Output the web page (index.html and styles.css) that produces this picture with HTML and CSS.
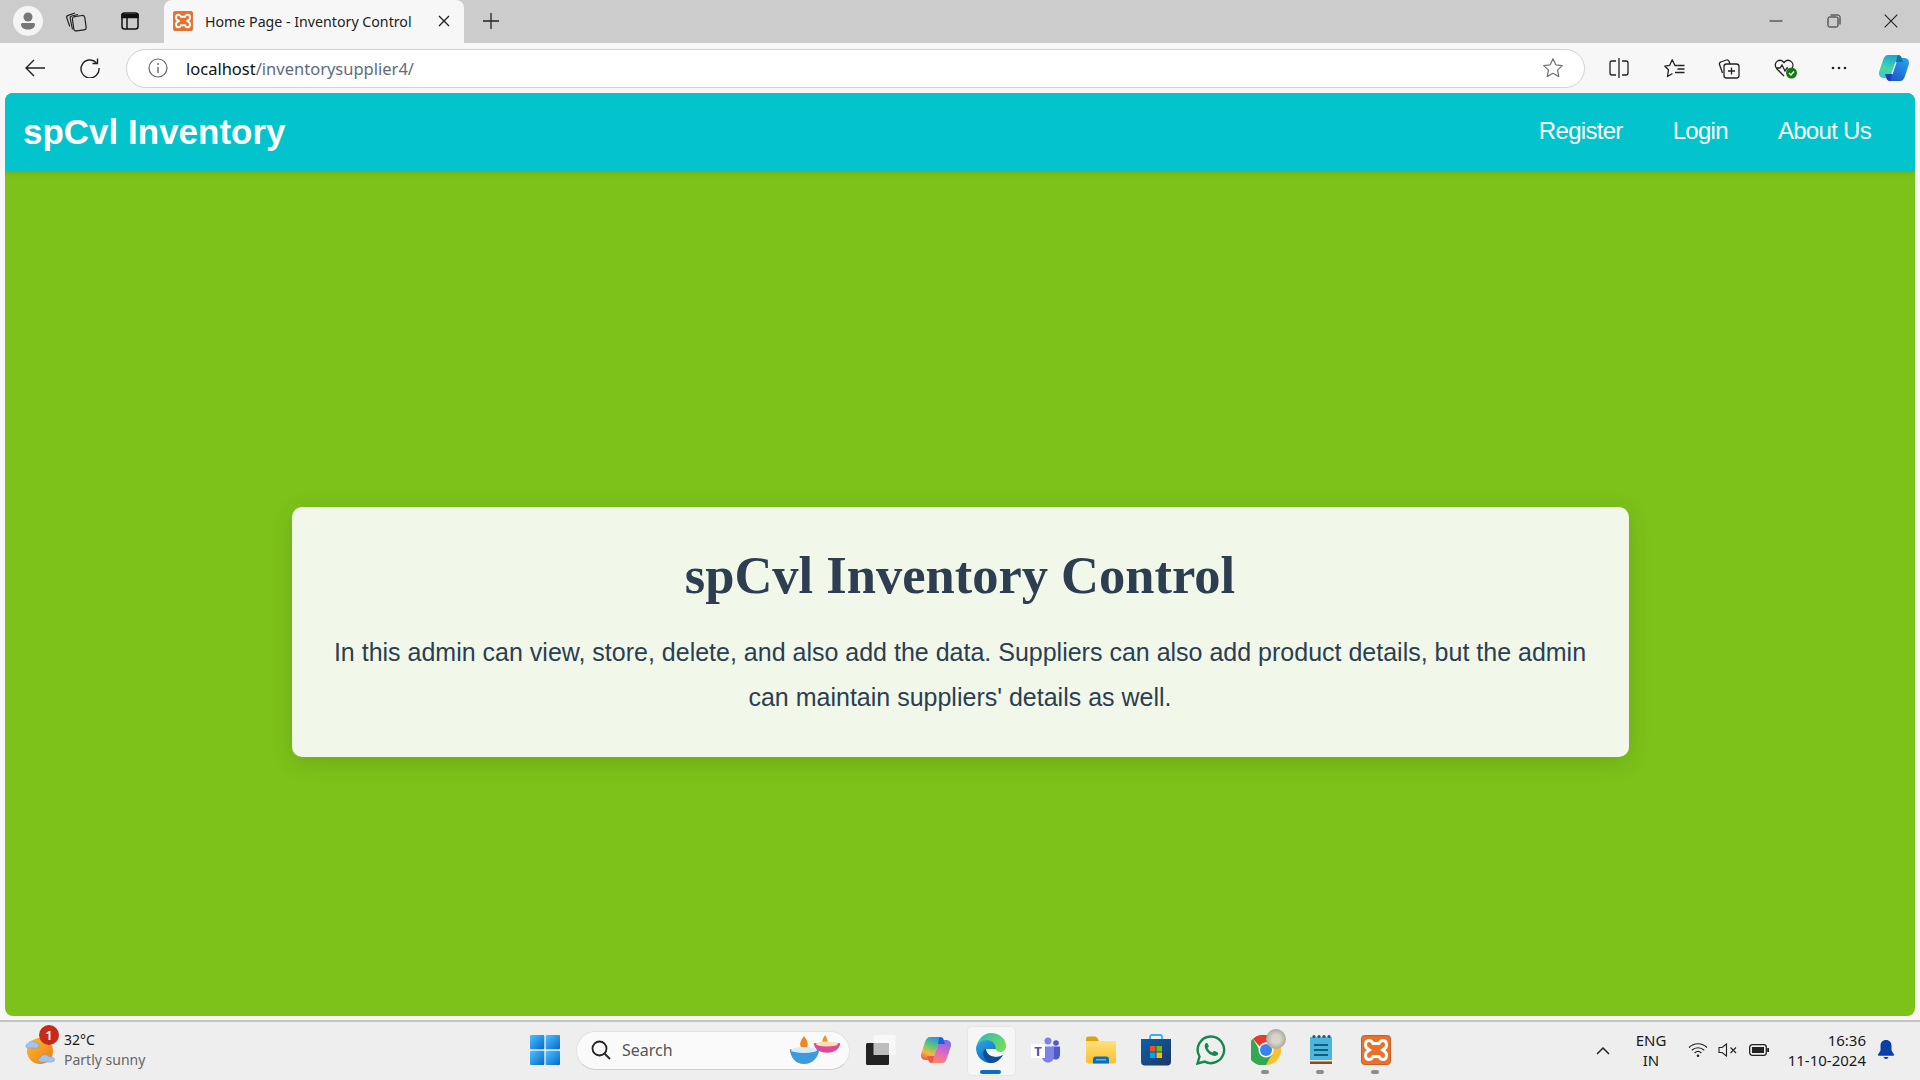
FILE: index.html
```html
<!DOCTYPE html>
<html lang="en">
<head>
  <meta charset="UTF-8">
  <title>Home Page - Inventory Control</title>
  <link rel="stylesheet" href="styles.css">
</head>
<body>

  <svg class="defs" width="0" height="0">
    <defs>
      <symbol id="xampp" viewBox="0 0 30 30">
        <rect x="0.5" y="0.5" width="29" height="29" rx="3" fill="#e8722c"/>
        <rect x="0.5" y="0.5" width="29" height="29" rx="3" fill="none" stroke="#c9601f"/>
        <path d="M8 5.500c-2.400 0-3.500 2.200-3.500 4.500 0 2 1 3.400 3 4.200l1 .8-1 .8c-2 .8-3 2.200-3 4.200 0 2.300 1.100 4.500 3.500 4.500 2 0 3.200-1.200 4-3h6c.8 1.800 2 3 4 3 2.400 0 3.500-2.200 3.500-4.500 0-2-1-3.400-3-4.200l-1-.8 1-.8c2-.8 3-2.200 3-4.200 0-2.300-1.100-4.500-3.500-4.500-2 0-3.200 1.200-4 3h-6c-.8-1.800-2-3-4-3z" fill="none" stroke="#fff" stroke-width="3"/>
      </symbol>
      <linearGradient id="cpA" x1="0.6" y1="0" x2="0.3" y2="1">
        <stop offset="0" stop-color="#19a4dc"/>
        <stop offset="0.6" stop-color="#45d8a4"/>
        <stop offset="1" stop-color="#3fc9c0"/>
      </linearGradient>
      <linearGradient id="cpB" x1="0.8" y1="0" x2="0.2" y2="1">
        <stop offset="0" stop-color="#2aa0ea"/>
        <stop offset="1" stop-color="#1a55d0"/>
      </linearGradient>
      <linearGradient id="cpC" x1="0.7" y1="0" x2="0.3" y2="1">
        <stop offset="0" stop-color="#2f8cf0"/>
        <stop offset="0.4" stop-color="#58c878"/>
        <stop offset="0.75" stop-color="#f5b83c"/>
        <stop offset="1" stop-color="#f2604e"/>
      </linearGradient>
      <linearGradient id="cpD" x1="0.7" y1="0" x2="0.3" y2="1">
        <stop offset="0" stop-color="#7a6cf0"/>
        <stop offset="0.55" stop-color="#e468c0"/>
        <stop offset="1" stop-color="#f78a5c"/>
      </linearGradient>
      <linearGradient id="winG" x1="0" y1="0" x2="1" y2="1">
        <stop offset="0" stop-color="#4cc2ff"/>
        <stop offset="1" stop-color="#0668c8"/>
      </linearGradient>
      <linearGradient id="edgeG" x1="0" y1="0" x2="0.6" y2="1">
        <stop offset="0" stop-color="#2fa8e4"/>
        <stop offset="1" stop-color="#0d62b8"/>
      </linearGradient>
      <linearGradient id="edgeT" x1="0" y1="0" x2="1" y2="0.6">
        <stop offset="0" stop-color="#2cb5c8"/>
        <stop offset="1" stop-color="#6ede58"/>
      </linearGradient>
      <linearGradient id="sunG" x1="0" y1="0" x2="1" y2="1">
        <stop offset="0" stop-color="#fbbd2e"/>
        <stop offset="1" stop-color="#ee7a14"/>
      </linearGradient>
      <linearGradient id="folderG" x1="0" y1="0" x2="0" y2="1">
        <stop offset="0" stop-color="#ffe17a"/>
        <stop offset="1" stop-color="#f9bf2c"/>
      </linearGradient>
      <linearGradient id="storeG" x1="0" y1="0" x2="1" y2="1">
        <stop offset="0" stop-color="#0c62a8"/>
        <stop offset="1" stop-color="#1d3668"/>
      </linearGradient>
    </defs>
  </svg>

  <div class="tabstrip">
    <div class="profile">
      <svg width="30" height="30" viewBox="0 0 30 30"><circle cx="15" cy="15" r="15" fill="#f4f4f4"/><circle cx="15" cy="11" r="4.500" fill="#777"/><path d="M8 18.500c0-1 .8-1.500 1.500-1.500h11c.8 0 1.500.5 1.500 1.500 0 3-3 5-7 5s-7-2-7-5z" fill="#777"/></svg>
    </div>
    <div class="strip-btn">
      <svg width="22" height="22" viewBox="0 0 22 22" fill="none" stroke="#222" stroke-width="1.200"><rect x="8" y="6" width="12.500" height="14.500" rx="2.500" transform="rotate(-8 14 13)"/><path d="M7.500 19.500L5.200 8.500c-.2-1.200.4-2.200 1.600-2.500l6.200-1.500"/><path d="M4.800 16.500L1.800 8c-.4-1.200.2-2.200 1.300-2.600L10 3"/></svg>
    </div>
    <div class="strip-btn">
      <svg width="20" height="20" viewBox="0 0 20 20" fill="none" stroke="#111" stroke-width="1.500"><rect x="2" y="2" width="16" height="16" rx="2.500"/><path d="M2 3.500h16v3H2z" fill="#111"/><path d="M7 6v12"/></svg>
    </div>
    <div class="tab">
      <svg class="favicon" width="20" height="20"><use href="#xampp"/></svg>
      <span class="tab-title">Home Page - Inventory Control</span>
      <svg class="tab-close" width="12" height="12" viewBox="0 0 12 12" stroke="#222" stroke-width="1.400"><path d="M1 1l10 10M11 1L1 11"/></svg>
    </div>
    <div class="new-tab">
      <svg width="18" height="18" viewBox="0 0 18 18" stroke="#222" stroke-width="1.300"><path d="M9 1v16M1 9h16"/></svg>
    </div>
    <div class="win-controls">
      <div class="win-btn"><svg width="14" height="14" viewBox="0 0 14 14" stroke="#222" stroke-width="1"><path d="M0.500 7h13"/></svg></div>
      <div class="win-btn"><svg width="14" height="14" viewBox="0 0 14 14" fill="none" stroke="#222" stroke-width="1"><rect x="1" y="3" width="10" height="10" rx="1.500"/><path d="M3.500 1h7.500c1.100 0 2 .9 2 2v7.500"/></svg></div>
      <div class="win-btn"><svg width="14" height="14" viewBox="0 0 14 14" stroke="#222" stroke-width="1.100"><path d="M.7.7l12.600 12.600M13.300.7L.7 13.300"/></svg></div>
    </div>
  </div>

  <div class="toolbar">
    <div class="tool-btn">
      <svg width="20" height="20" viewBox="0 0 20 20" fill="none" stroke="#222" stroke-width="1.400"><path d="M20 10H1M9 2l-8 8 8 8"/></svg>
    </div>
    <div class="tool-btn">
      <svg width="20" height="20" viewBox="0 0 20 20" fill="none" stroke="#222" stroke-width="1.400"><path d="M16.500 4.700A9 9 0 1 0 19 10"/><path d="M17.500 .5v5h-5"/></svg>
    </div>
    <div class="address">
      <svg class="info" width="20" height="20" viewBox="0 0 20 20" fill="none" stroke="#666" stroke-width="1.200"><circle cx="10" cy="10" r="9"/><path d="M10 9v6" stroke-width="1.400"/><circle cx="10" cy="6" r=".9" fill="#666" stroke="none"/></svg>
      <span class="url"><span class="host">localhost</span>/inventorysupplier4/</span>
      <svg class="star" width="22" height="22" viewBox="0 0 22 22" fill="none" stroke="#777" stroke-width="1.300" stroke-linejoin="round"><path d="M11 1.800l2.800 6 6.500.8-4.800 4.500 1.300 6.500-5.800-3.300-5.800 3.300 1.300-6.500-4.800-4.500 6.500-.8z"/></svg>
    </div>
    <div class="tool-icons">
      <div class="tool-icon">
        <svg width="20" height="22" viewBox="0 0 20 22" fill="none" stroke="#222" stroke-width="1.300"><path d="M7 4H3c-1.200 0-2 .8-2 2v10c0 1.200.8 2 2 2h4"/><path d="M13 4h4c1.200 0 2 .8 2 2v10c0 1.200-.8 2-2 2h-4"/><path d="M10 1v20"/></svg>
      </div>
      <div class="tool-icon">
        <svg width="21" height="19" viewBox="0 0 21 19" fill="none" stroke="#222" stroke-width="1.300" stroke-linejoin="round"><path d="M13.500 6.500H11L8.200 .8 5.700 6.300.8 7.200l3.700 3.500-1 6.800 5-3"/><path d="M13.500 6.500h7M13.500 10h7M11 13.500h9.500"/></svg>
      </div>
      <div class="tool-icon">
        <svg width="22" height="22" viewBox="0 0 22 22" fill="none" stroke="#222" stroke-width="1.300"><rect x="6" y="7" width="15" height="14" rx="2.500"/><path d="M13.500 10.500v7M10 14h7"/><path d="M4.500 16L1.500 7.500C1.100 6.400 1.700 5.300 2.800 5L8.500 3c1-.3 2 .2 2.500 1.200l1 2.800"/></svg>
      </div>
      <div class="tool-icon health">
        <svg width="24" height="24" viewBox="0 0 24 24" fill="none"><path d="M10 20l-7-7C.5 10.500.8 6.500 3.500 5c2.500-1.400 5-.5 6.500 1.500C11.500 4.500 14 3.600 16.500 5c2.500 1.400 3 4.500 1.800 7" stroke="#222" stroke-width="1.300"/><path d="M2 12h4l2-3 3 6 2-3h1" stroke="#222" stroke-width="1.300"/><circle cx="17.500" cy="17" r="5.500" fill="#107c10"/><path d="M15 17l2 2 3-3.500" stroke="#fff" stroke-width="1.400"/></svg>
      </div>
      <div class="tool-icon">
        <svg width="16" height="4" viewBox="0 0 16 4" fill="#222"><circle cx="2" cy="2" r="1.300"/><circle cx="8" cy="2" r="1.300"/><circle cx="14" cy="2" r="1.300"/></svg>
      </div>
      <div class="tool-icon">
        <svg width="32" height="28" viewBox="0 0 32 28">
          <path d="M10 1h10c1.500 0 3 1 3.500 2.500L18 8l-4 12c-.8 2.500-2.500 4-5 4H5.500C2 24 .2 21 1.200 17.500L5 6c1-3 2.500-5 5-5z" fill="url(#cpA)"/>
          <path d="M22 27H12c-1.500 0-3-1-3.500-2.500L14 20l4-12c.8-2.500 2.500-4 5-4h3.500C30 4 31.800 7 30.800 10.500L27 22c-1 3-2.500 5-5 5z" fill="url(#cpB)"/>
          <path d="M18 8l-4 12" stroke="#fff" stroke-width="1.200"/>
          <path d="M20 1c1.500 0 3 1 3.500 2.500L25 8h-7c.8-3 1-6 2-7z" fill="#12759c"/>
          <path d="M12 27c-1.500 0-3-1-3.500-2.500L7 20h7c-.8 3-1 6-2 7z" fill="#1b3fb8"/>
        </svg>
      </div>
    </div>
  </div>

  <div class="page">
    <nav class="navbar">
      <a class="brand">spCvl Inventory</a>
      <div class="nav-links">
        <a>Register</a>
        <a>Login</a>
        <a>About Us</a>
      </div>
    </nav>
    <main class="main">
      <section class="card">
        <h1>spCvl Inventory Control</h1>
        <p>In this admin can view, store, delete, and also add the data. Suppliers can also add product details, but the admin can maintain suppliers' details as well.</p>
      </section>
    </main>
  </div>

  <div class="taskbar">
    <div class="weather">
      <div class="weather-icon">
        <svg width="32" height="36" viewBox="0 0 32 36"><circle cx="15" cy="19" r="13" fill="url(#sunG)"/><path d="M3 16c-2.500 0-3-4 0-4 .5-3 6-4 8-1 3-.5 4 4 1 5z" fill="#a3c4f3" stroke="#6f9de0" stroke-width=".6"/><path d="M16 30c-3 0-3.500-4-.5-4.500 .5-3 6-4 8-1 3 0 6 1 6 3 0 1.500-1 2.500-3 2.500z" fill="#a3c4f3" stroke="#6f9de0" stroke-width=".6"/></svg>
        <span class="badge">1</span>
      </div>
      <div class="weather-text">
        <span class="temp">32°C</span>
        <span class="sky">Partly sunny</span>
      </div>
    </div>

    <div class="task-slot">
      <svg width="30" height="30" viewBox="0 0 30 30" fill="url(#winG)"><rect x="0" y="0" width="14.300" height="14.300" rx="1"/><rect x="15.700" y="0" width="14.300" height="14.300" rx="1"/><rect x="0" y="15.700" width="14.300" height="14.300" rx="1"/><rect x="15.700" y="15.700" width="14.300" height="14.300" rx="1"/></svg>
    </div>

    <div class="search">
      <svg width="20" height="20" viewBox="0 0 20 20" fill="none" stroke="#222" stroke-width="1.800"><circle cx="8.500" cy="8.500" r="7"/><path d="M13.500 13.500l5.500 5.500"/></svg>
      <span class="search-label">Search</span>
      <svg class="diya" width="52" height="30" viewBox="0 0 52 30">
        <path d="M36 0c-2 3-3 5-2.500 7 .3 1.500 1.500 2.500 2.500 2.500s2.200-1 2.500-2.500c.5-2-.5-4-2.500-7z" fill="#f5941e"/>
        <path d="M26 8h24c1 0 1.500 .8 1 1.800-1 4-5 8-13 8s-12-4-13-8c-.5-1 0-1.800 1-1.800z" fill="#e2489a"/>
        <ellipse cx="38" cy="9" rx="11" ry="2.500" fill="#f9e0b8"/>
        <path d="M15 1c-3 4-4.500 7-3.500 10 .5 2 2 3 3.500 3s3-1 3.500-3c1-3-.5-6-3.500-10z" fill="#f5851e"/>
        <path d="M1 14h28c1 0 1.500 1 1 2-1 6-6 13-15 13S2 22 1 16c-.5-1 0-2 1-2z" fill="#3b9bdc"/>
        <ellipse cx="15" cy="15" rx="13" ry="3" fill="#d6ecf7"/>
      </svg>
    </div>

    <div class="task-slot">
      <svg width="30" height="30" viewBox="0 0 30 30"><rect x="7.500" y="0" width="22" height="20" rx="1" fill="#f8f8f8"/><rect x="0" y="8" width="23" height="22" rx="1.500" fill="#222"/><rect x="7.500" y="8" width="15.500" height="12" fill="#bdbdbd"/></svg>
    </div>
    <div class="task-slot">
      <svg width="32" height="28" viewBox="0 0 32 28">
        <path d="M10 1h10c1.500 0 3 1 3.500 2.500L18 8l-4 12c-.8 2.500-2.500 4-5 4H5.500C2 24 .2 21 1.200 17.500L5 6c1-3 2.500-5 5-5z" fill="url(#cpC)"/>
        <path d="M22 27H12c-1.500 0-3-1-3.500-2.500L14 20l4-12c.8-2.500 2.500-4 5-4h3.500C30 4 31.800 7 30.800 10.500L27 22c-1 3-2.500 5-5 5z" fill="url(#cpD)"/>
        <path d="M20 1c1.500 0 3 1 3.500 2.500L25 8h-7c.8-3 1-6 2-7z" fill="#1f5fd8"/>
        <path d="M12 27c-1.500 0-3-1-3.500-2.500L7 20h7c-.8 3-1 6-2 7z" fill="#ee5a48"/>
      </svg>
    </div>
    <div class="task-slot active">
      <svg width="32" height="32" viewBox="0 0 32 32">
        <path d="M16 1c8.500 0 15 6 15 13 0 4-3 6-6 6-2.500 0-4-1-4-3 0-4-4-8-9-8-5 0-10 3-11 8C2 8 8 1 16 1z" fill="url(#edgeT)"/>
        <path d="M1 16c1-5 6-8 11-8 5 0 9 4 9 9H11c0 5 5 8 10 8 3 0 5-.7 7-2-3 4-7 8-12 8C7 31 1 24 1 16z" fill="url(#edgeG)"/>
        <path d="M11 17c-3 1-3.500 5-2 8 2 4 5 6 7 6 5 0 9-3 12-8-2 1.300-4 2-7 2-5 0-10-3-10-8z" fill="#0b4f96"/>
      </svg>
      <span class="active-bar"></span>
    </div>
    <div class="task-slot">
      <svg width="30" height="26" viewBox="0 0 30 26"><circle cx="17" cy="4" r="3.500" fill="#7b83eb"/><circle cx="25" cy="6" r="2.800" fill="#5059c9"/><path d="M21 9.500h8v8c0 3-2 5-4.500 5S21 21 21 18z" fill="#5059c9"/><path d="M11 9.500h12v10c0 3.500-2.500 6-6 6s-6-2.500-6-6z" fill="#7b83eb"/><rect x="0" y="7" width="14" height="14" fill="#fff"/><text class="teams-t" x="7" y="18.500">T</text></svg>
    </div>
    <div class="task-slot">
      <svg width="32" height="28" viewBox="0 0 32 28"><path d="M1 3c0-1.500 1-2.500 2.500-2.500h6c1 0 2 .5 3 1.800L14 5H1z" fill="#e0a30e"/><path d="M1 5h30v20c0 1.500-1 2.500-2.500 2.500h-25C2 27.500 1 26.500 1 25z" fill="url(#folderG)"/><path d="M8 27.500v-4c0-2 1-3 3-3h10c2 0 3 1 3 3v4z" fill="#0a6cc2"/><rect x="11" y="23" width="10" height="1.500" fill="#5db2ea"/></svg>
    </div>
    <div class="task-slot">
      <svg width="30" height="32" viewBox="0 0 30 32"><path d="M9 5V3c0-1 .8-2 2-2h8c1.200 0 2 1 2 2v2" fill="none" stroke="#29b6f6" stroke-width="1.800"/><path d="M0 5h30v23c0 2-1.500 3.500-3.500 3.500h-23C1.500 31.500 0 30 0 28z" fill="url(#storeG)"/><rect x="9" y="12" width="5.500" height="5.500" fill="#f25022"/><rect x="15.500" y="12" width="5.500" height="5.500" fill="#7fba00"/><rect x="9" y="18.500" width="5.500" height="5.500" fill="#00a4ef"/><rect x="15.500" y="18.500" width="5.500" height="5.500" fill="#ffb900"/></svg>
    </div>
    <div class="task-slot">
      <svg width="30" height="30" viewBox="0 0 30 30"><path d="M15 1.500A13.300 13.300 0 0 0 3.500 21.500L1.500 28.500l7.200-1.900A13.300 13.300 0 1 0 15 1.500z" fill="none" stroke="#17874e" stroke-width="2.400"/><path d="M10.500 8c-.8 0-1.800 1.200-1.800 3 0 4 4.500 9.500 9.800 10 2 .2 3.500-1 3.700-2.400.1-.6 0-1-.5-1.200l-3-1.400c-.5-.2-.8 0-1.100.3l-1 1.300c-2.400-.9-4-2.500-5-4.600l1-1.200c.2-.3.300-.6.100-1l-1.200-2.500C11.300 8 11 8 10.500 8z" fill="#17874e"/></svg>
    </div>
    <div class="task-slot chrome-slot">
      <svg width="30" height="30" viewBox="0 0 30 30"><path d="M15 0a15 15 0 0 1 13 7.500H15a7.500 7.500 0 0 0-6.500 3.800L2 3.800A15 15 0 0 1 15 0z" fill="#e33b2e"/><path d="M28 7.500A15 15 0 0 1 15 30l6.500-11.300A7.500 7.500 0 0 0 21.500 11z" fill="#fbc02d"/><path d="M2 3.800l6.500 11.200a7.500 7.500 0 0 0 13 3.700L15 30A15 15 0 0 1 2 3.800z" fill="#34a853"/><circle cx="15" cy="15" r="7.500" fill="#fff"/><circle cx="15" cy="15" r="6" fill="#3b82f0"/></svg>
      <span class="chrome-avatar"></span>
      <span class="run-dot"></span>
    </div>
    <div class="task-slot">
      <svg width="24" height="32" viewBox="0 0 24 32"><rect x="1" y="3" width="22" height="26" rx="1" fill="#4cb5de"/><rect x="1" y="27" width="22" height="3" fill="#8a4a1f"/><rect x="1" y="26" width="22" height="1.500" fill="#f2e3cf"/><g fill="#0e5f86"><circle cx="5" cy="2.500" r="1.600"/><circle cx="10" cy="2.500" r="1.600"/><circle cx="15" cy="2.500" r="1.600"/><circle cx="20" cy="2.500" r="1.600"/><rect x="5" y="10" width="14" height="2"/><rect x="5" y="15" width="14" height="2"/><rect x="5" y="20" width="14" height="2"/></g></svg>
      <span class="run-dot"></span>
    </div>
    <div class="task-slot">
      <svg width="30" height="30"><use href="#xampp"/></svg>
      <span class="run-dot"></span>
    </div>

    <div class="tray">
      <svg class="chevron" width="14" height="9" viewBox="0 0 14 9" fill="none" stroke="#222" stroke-width="1.500"><path d="M1 8l6-6 6 6"/></svg>
      <div class="lang"><span>ENG</span><span>IN</span></div>
      <div class="tray-icons">
        <svg width="20" height="16" viewBox="0 0 20 16" fill="none" stroke="#222" stroke-width="1.200"><path d="M1 5.500c5-5 13-5 18 0M3.800 8.300c3.500-3.400 8.900-3.400 12.400 0M6.600 11c2-1.800 4.800-1.800 6.800 0"/><circle cx="10" cy="13.800" r="1.300" fill="#222" stroke="none"/></svg>
        <svg width="20" height="14" viewBox="0 0 20 14" fill="none" stroke="#222" stroke-width="1.100"><path d="M1 4.500h3L8.500 1v12L4 9.500H1z"/><path d="M12.500 4.500l5.500 5.500M18 4.500L12.500 10"/></svg>
        <svg width="20" height="12" viewBox="0 0 20 12"><rect x=".7" y=".7" width="16.600" height="10.600" rx="2.500" fill="none" stroke="#222" stroke-width="1.300"/><rect x="3" y="3" width="12" height="6" fill="#222"/><rect x="18.200" y="4" width="1.800" height="4" fill="#222"/></svg>
      </div>
      <div class="clock"><span>16:36</span><span>11-10-2024</span></div>
      <svg class="bell" width="18" height="20" viewBox="0 0 18 20" fill="#0b3fa8"><path d="M9 0C5.500 0 3.500 2.500 3.500 6v4.500L1 14.500c-.3.600 0 1.200.7 1.200h14.600c.7 0 1-.6.7-1.200l-2.500-4V6C14.500 2.500 12.500 0 9 0z"/><path d="M6.500 17h5c-.4 1.300-1.400 2-2.500 2s-2.100-.7-2.500-2z"/></svg>
    </div>
  </div>

</body>
</html>
```

FILE: styles.css
```css
* {
  box-sizing: border-box;
}

html, body {
  margin: 0;
  height: 100%;
}

body {
  width: 1920px;
  height: 1080px;
  overflow: hidden;
  display: flex;
  flex-direction: column;
  background-color: #f7f7f7;
  font-family: "Noto Sans", sans-serif;
  color: #1a1a1a;
}

.defs {
  position: absolute;
}

svg {
  display: block;
  flex-shrink: 0;
}

/* browser tab strip */
.tabstrip {
  height: 43px;
  display: flex;
  align-items: center;
  background-color: #cccccc;
  padding-left: 13px;
  padding-bottom: 1px;
}

.profile {
  width: 30px;
  height: 30px;
}

.strip-btn {
  width: 54px;
  display: flex;
  justify-content: center;
}

.strip-btn:nth-child(2) {
  margin-left: 6px;
}

.tab {
  align-self: flex-end;
  width: 300px;
  height: 43px;
  margin-left: 7px;
  margin-bottom: -1px;
  display: flex;
  align-items: center;
  padding-left: 9px;
  padding-bottom: 1px;
  background-color: #f7f7f7;
  border-radius: 8px 8px 0 0;
}

.tab-title {
  margin-left: 12px;
  width: 233px;
  font-size: 14.2px;
  white-space: nowrap;
  color: #222;
}

.new-tab {
  margin-left: 18px;
}

.win-controls {
  margin-left: auto;
  display: flex;
}

.win-btn {
  width: 57.500px;
  height: 42px;
  display: flex;
  align-items: center;
  justify-content: center;
}

/* address bar row */
.toolbar {
  height: 50px;
  display: flex;
  align-items: center;
  padding-left: 7px;
  background-color: #f7f7f7;
}

.tool-btn {
  width: 55px;
  display: flex;
  justify-content: center;
}

.address {
  flex: 1;
  height: 39px;
  margin-left: 9px;
  margin-right: 7px;
  display: flex;
  align-items: center;
  padding: 0 20px 0 21px;
  background-color: #fff;
  border: 1px solid #d2d2d2;
  border-radius: 20px;
}

.url {
  margin-left: 18px;
  font-size: 16.5px;
  color: #5f6b7c;
}

.host {
  color: #111;
}

.star {
  margin-left: auto;
}

.tool-icons {
  display: flex;
  width: 328px;
}

.tool-icon {
  width: 54.900px;
  flex: none;
  display: flex;
  align-items: center;
  justify-content: center;
}

.tool-icon.health svg {
  margin-left: 3px;
}

/* the page itself */
.page {
  height: 923px;
  margin: 0 5px;
  border-radius: 8px;
  overflow: hidden;
  background-color: #7cc21a;
}

.navbar {
  position: relative;
  height: 78px;
  display: flex;
  align-items: center;
  justify-content: space-between;
  padding: 0 44px 0 18px;
  background-color: #03c3cc;
  box-shadow: 0 2px 5px rgba(0,0,0,0.1);
  font-family: "Liberation Sans", Arial, sans-serif;
  color: #fff;
}

.brand {
  font-size: 35px;
  font-weight: bold;
}

.nav-links {
  display: flex;
  gap: 50px;
  padding-bottom: 2px;
  font-size: 24px;
  letter-spacing: -0.7px;
}

.main {
  display: flex;
  justify-content: center;
  padding-top: 336px;
}

.card {
  width: 1337px;
  height: 250px;
  padding: 40px;
  text-align: center;
  background-color: #f1f8e9;
  border-radius: 10px;
  box-shadow: 0 5px 25px rgba(0,0,0,0.12);
  color: #2c3e50;
}

.card h1 {
  margin: 0 0 27px;
  font-family: "Liberation Serif", "Times New Roman", serif;
  font-size: 52.5px;
  font-weight: bold;
  line-height: 56px;
}

.card p {
  margin: 0;
  font-family: "Liberation Sans", Arial, sans-serif;
  font-size: 25px;
  line-height: 45px;
}

/* windows taskbar */
.taskbar {
  margin-top: 4px;
  height: 60px;
  display: flex;
  align-items: center;
  padding-bottom: 2px;
  background-color: #eeeeee;
  border-top: 2px solid #c4c4c4;
}

.weather {
  width: 517px;
  display: flex;
  align-items: center;
  padding-left: 25px;
}

.weather-icon {
  position: relative;
  width: 32px;
  height: 36px;
}

.badge {
  position: absolute;
  top: -7px;
  left: 14px;
  width: 20px;
  height: 20px;
  border-radius: 50%;
  background-color: #c42b1c;
  color: #fff;
  font-size: 13px;
  font-weight: 600;
  line-height: 20px;
  text-align: center;
}

.weather-text {
  margin-left: 7px;
  display: flex;
  flex-direction: column;
  font-size: 14px;
  line-height: 20px;
}

.sky {
  color: #666;
}

.task-slot {
  position: relative;
  width: 55px;
  height: 58px;
  display: flex;
  align-items: center;
  justify-content: center;
}

.task-slot.active::before {
  content: "";
  position: absolute;
  top: 5px;
  left: 4px;
  width: 47px;
  height: 48px;
  background-color: #f6f6f6;
  border: 1px solid #e6e6e6;
  border-radius: 5px;
}

.task-slot.active svg {
  position: relative;
  margin-bottom: 4px;
}

.active-bar {
  position: absolute;
  left: 17px;
  bottom: 5px;
  width: 21px;
  height: 4px;
  border-radius: 2px;
  background-color: #0a6cc8;
}

.run-dot {
  position: absolute;
  left: 23px;
  bottom: 5px;
  width: 8px;
  height: 4px;
  border-radius: 2px;
  background-color: #8c8c8c;
}

.chrome-avatar {
  position: absolute;
  top: 8px;
  left: 28px;
  width: 20px;
  height: 20px;
  border-radius: 50%;
  background: radial-gradient(circle, #d8d4c8 30%, #8c8a84 100%);
}

.search {
  width: 274px;
  height: 39px;
  margin: 0 3px 0 4px;
  display: flex;
  align-items: center;
  padding: 0 8px 0 14px;
  background-color: #fafafa;
  border: 1px solid #e2e2e2;
  border-bottom-color: #cfcfcf;
  border-radius: 20px;
}

.search-label {
  margin-left: 11px;
  font-size: 16px;
  color: #555;
}

.diya {
  margin-left: auto;
}

.teams-t {
  font-family: "Noto Sans", sans-serif;
  font-size: 13px;
  font-weight: 700;
  fill: #4b53bc;
  text-anchor: middle;
}

.tray {
  flex: 1;
  display: flex;
  align-items: center;
  padding-left: 193px;
}

.chevron {
  margin-right: 25px;
}

.lang {
  width: 32px;
  display: flex;
  flex-direction: column;
  align-items: center;
  font-size: 15px;
  line-height: 20px;
}

.tray-icons {
  display: flex;
  align-items: center;
  gap: 10.5px;
  margin-left: 20.5px;
}

.clock {
  width: 97.5px;
  display: flex;
  flex-direction: column;
  align-items: flex-end;
  font-size: 15px;
  line-height: 20px;
}

.bell {
  margin-left: 11px;
}
```
